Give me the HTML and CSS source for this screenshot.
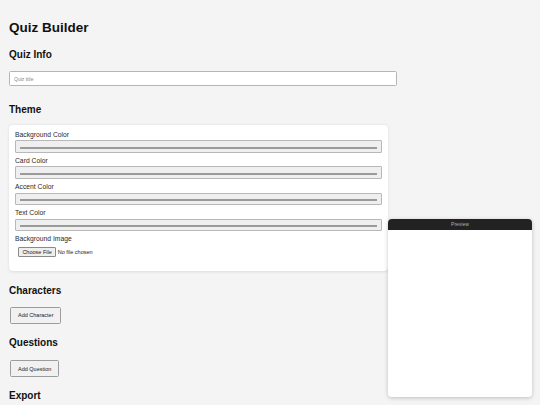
FILE: index.html
```html
<!DOCTYPE html>
<html lang="en">
<head>
<meta charset="utf-8">
<title>Quiz Builder</title>
<link rel="stylesheet" href="styles.css">
</head>
<body>
<h1 class="title">Quiz Builder</h1>

<section class="block block-info">
  <h2 class="block-title">Quiz Info</h2>
  <input class="text-input" type="text" placeholder="Quiz title">
</section>

<section class="block">
  <h2 class="block-title">Theme</h2>
  <div class="card">
    <div class="field">
      <label class="field-label">Background Color</label>
      <input class="color-input" type="color">
    </div>
    <div class="field">
      <label class="field-label">Card Color</label>
      <input class="color-input" type="color">
    </div>
    <div class="field">
      <label class="field-label">Accent Color</label>
      <input class="color-input" type="color">
    </div>
    <div class="field">
      <label class="field-label">Text Color</label>
      <input class="color-input" type="color">
    </div>
    <div class="field field-last">
      <label class="field-label">Background Image</label>
      <input class="file-input" type="file">
    </div>
  </div>
</section>

<section class="block">
  <h2 class="block-title">Characters</h2>
  <button class="btn" type="button">Add Character</button>
</section>

<section class="block">
  <h2 class="block-title block-title-wide">Questions</h2>
  <button class="btn" type="button">Add Question</button>
</section>

<section class="block">
  <h2 class="block-title">Export</h2>
</section>

<aside class="preview">
  <div class="preview-bar">Preview</div>
  <div class="preview-body"></div>
</aside>
</body>
</html>
```

FILE: styles.css
```css
html, body {
  margin: 0;
  padding: 0;
}

body {
  background: #f4f4f4;
  font-family: "Liberation Sans", Arial, sans-serif;
  color: #111;
  padding: 0 9px;
  overflow: hidden;
  height: 405px;
  box-sizing: border-box;
}

.title {
  font-size: 13.5px;
  line-height: 16px;
  font-weight: bold;
  margin: 20.3px 0 12.7px;
}

.block {
  margin-bottom: 13.6px;
}

.block-info {
  margin-bottom: 17.3px;
}

.block-title {
  font-size: 10px;
  line-height: 12px;
  font-weight: bold;
  margin: 0 0 10.3px;
}

.block-title-wide {
  margin-bottom: 11.3px;
}

.text-input {
  display: block;
  box-sizing: border-box;
  width: 388px;
  height: 15px;
  margin: 0;
  padding: 0 4px;
  border: 0.7px solid #b5b5b5;
  border-radius: 1.5px;
  background: #fff;
  font-family: inherit;
  font-size: 5px;
  color: #333;
  outline: none;
}

.text-input::placeholder {
  color: #8a8a8a;
}

.card {
  width: 379px;
  box-sizing: border-box;
  background: #fff;
  border-radius: 4px;
  box-shadow: 0 0.5px 3px rgba(0, 0, 0, 0.1);
  padding: 6px 6px 10.5px;
  margin-top: -1px;
}

.field {
  margin-bottom: 4.1px;
}

.field-last {
  margin-bottom: 0;
}

.field-label {
  display: block;
  font-size: 6.75px;
  line-height: 8px;
  color: #2a2a2a;
  margin-bottom: 1.5px;
}

.color-input {
  display: block;
  box-sizing: border-box;
  width: 100%;
  height: 11.7px;
  padding: 5.25px 4px;
  margin: 0;
  border: 0.6px solid #b8b8b8;
  border-radius: 1px;
  background: #efefef;
  -webkit-appearance: none;
  appearance: none;
  cursor: pointer;
}

.color-input::-webkit-color-swatch-wrapper {
  padding: 0;
}

.color-input::-webkit-color-swatch {
  border: 0.5px solid #9a9a9a;
  border-radius: 0;
}

.file-input {
  display: block;
  margin: 0;
  padding: 2.4px 3.4px 3.4px;
  font-family: inherit;
  font-size: 5.5px;
  line-height: 8.6px;
  color: #222;
}

.file-input::file-selector-button {
  font-family: inherit;
  font-size: 5.5px;
  line-height: 6.3px;
  padding: 0.9px 3px;
  margin-right: 2px;
  border: 0.6px solid #8a8a8a;
  border-radius: 1px;
  background: #efefef;
  color: #222;
}

.btn {
  display: block;
  margin: 0 0 0 1px;
  height: 16.5px;
  padding: 0 7px;
  box-sizing: border-box;
  background: #f1f1f1;
  border: 0.7px solid #9c9c9c;
  border-radius: 1.5px;
  font-family: inherit;
  font-size: 5.5px;
  color: #222;
}

.preview {
  position: fixed;
  right: 8px;
  bottom: 8px;
  width: 144px;
  height: 178px;
  background: #fff;
  border-radius: 4px;
  box-shadow: 0 1px 4px rgba(0, 0, 0, 0.22);
  overflow: hidden;
  display: flex;
  flex-direction: column;
}

.preview-bar {
  height: 11px;
  line-height: 11px;
  background: #222;
  color: #b0b0b0;
  font-size: 5px;
  text-align: center;
}

.preview-body {
  flex: 1;
}
```
